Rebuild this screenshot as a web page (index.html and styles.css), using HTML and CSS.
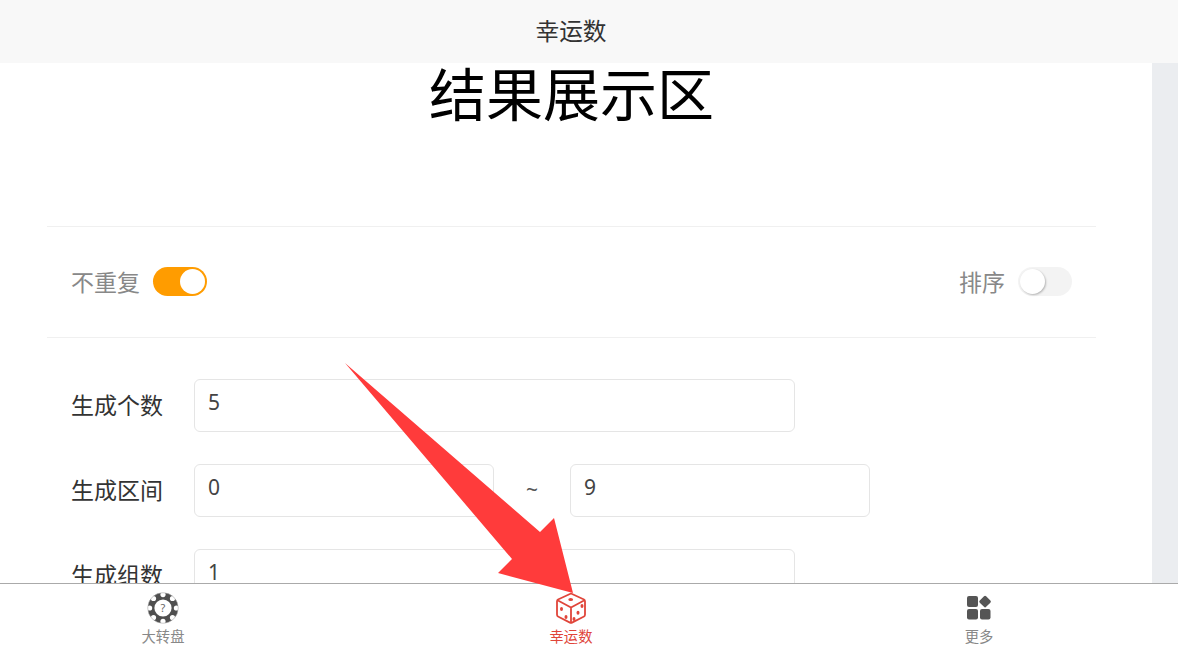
FILE: index.html
```html
<!DOCTYPE html>
<html lang="zh-CN">
<head>
<meta charset="utf-8">
<title>幸运数</title>
<link rel="stylesheet" href="styles.css">
</head>
<body>
<div class="app">
  <header class="navbar">幸运数</header>
  <div class="viewport">
    <main class="content">
      <h1 class="result">结果展示区</h1>
      <section class="options">
        <div class="option">
          <span class="option-label">不重复</span>
          <span class="switch switch-on"><span class="thumb"></span></span>
        </div>
        <div class="option">
          <span class="option-label">排序</span>
          <span class="switch"><span class="thumb"></span></span>
        </div>
      </section>
      <section class="form">
        <div class="row">
          <label class="row-label">生成个数</label>
          <input class="field field-wide" value="5">
        </div>
        <div class="row">
          <label class="row-label">生成区间</label>
          <input class="field field-half" value="0">
          <span class="tilde">~</span>
          <input class="field field-half" value="9">
        </div>
        <div class="row">
          <label class="row-label">生成组数</label>
          <input class="field field-wide" value="1">
        </div>
      </section>
    </main>
    <div class="scrollbar"></div>
  </div>
  <nav class="tabbar">
    <div class="tab">
      <svg class="tab-icon" viewBox="0 0 32 32">
        <circle cx="16" cy="16" r="15.2" fill="#4f4f4f"/>
        <g fill="#fff">
          <circle cx="16" cy="2.6" r="2.6"/>
          <circle cx="16" cy="29.4" r="2.6"/>
          <circle cx="2.6" cy="16" r="2.6"/>
          <circle cx="29.4" cy="16" r="2.6"/>
          <circle cx="6.5" cy="6.5" r="2.6"/>
          <circle cx="25.5" cy="6.5" r="2.6"/>
          <circle cx="6.5" cy="25.5" r="2.6"/>
          <circle cx="25.5" cy="25.5" r="2.6"/>
          <circle cx="16" cy="16" r="8.6"/>
        </g>
        <circle cx="16" cy="16" r="15.3" fill="none" stroke="#aaa" stroke-width="0.6"/>
        <text class="wheel-mark" x="16" y="20.3" text-anchor="middle">?</text>
      </svg>
      <span class="tab-label">大转盘</span>
    </div>
    <div class="tab tab-active">
      <svg class="tab-icon" viewBox="0 0 32 32">
        <path d="M16 1.5 L29 7.5 Q30 8 30 9.5 L30 22.5 Q30 24 29 24.5 L17 30.6 Q16 31 15 30.6 L3 24.5 Q2 24 2 22.5 L2 9.5 Q2 8 3 7.5 Z" fill="none" stroke="#e0453a" stroke-width="1.8" stroke-linejoin="round"/>
        <path d="M3 8.5 L16 15.5 L29 8.5 M16 15.5 L16 30" fill="none" stroke="#e0453a" stroke-width="1.8"/>
        <g fill="#e0453a">
          <ellipse cx="15.7" cy="7.5" rx="2.4" ry="1.6"/>
          <ellipse cx="6.5" cy="17" rx="1.5" ry="2"/>
          <ellipse cx="11" cy="25" rx="1.5" ry="2"/>
          <ellipse cx="27" cy="14" rx="1.5" ry="2"/>
          <ellipse cx="23" cy="20.7" rx="1.5" ry="2"/>
          <ellipse cx="19" cy="27" rx="1.5" ry="2"/>
        </g>
      </svg>
      <span class="tab-label">幸运数</span>
    </div>
    <div class="tab">
      <svg class="tab-icon" viewBox="0 0 32 32">
        <g fill="#555">
          <rect x="4" y="4" width="11" height="11" rx="2"/>
          <rect x="4" y="17" width="11" height="10.5" rx="2"/>
          <rect x="17" y="17" width="10.5" height="10.5" rx="2"/>
          <rect x="17.6" y="5" width="9" height="9" rx="1.5" transform="rotate(45 22 9.5)"/>
        </g>
      </svg>
      <span class="tab-label">更多</span>
    </div>
  </nav>
  <svg class="arrow" viewBox="0 0 1178 647" width="1178" height="647">
    <polygon points="345,363 540,532 554,518 573,593 498,573 512,559" fill="#ff3b3b"/>
  </svg>
</div>
</body>
</html>
```

FILE: styles.css
```css
* { box-sizing: border-box; }

html, body {
  margin: 0;
  height: 100%;
  overflow: hidden;
  background: #fff;
}

body {
  font-family: "Noto Sans", "Noto Sans CJK SC", sans-serif;
}

.app {
  position: relative;
  display: flex;
  flex-direction: column;
  height: 647px;
}

.navbar {
  flex: 0 0 63px;
  display: flex;
  align-items: center;
  justify-content: center;
  padding: 0 36px 4px 0;
  background: #f8f8f8;
  color: #333;
  font-size: 23.7px;
}

.viewport {
  flex: 1;
  min-height: 0;
  display: flex;
  overflow: hidden;
}

.content {
  flex: 1;
  min-width: 0;
  padding: 0 56px 0 47px;
}

.scrollbar {
  flex: 0 0 26px;
  background: #ebedf0;
}

.result {
  margin: 0;
  height: 163px;
  color: #000;
  font-size: 57px;
  font-weight: 400;
  line-height: 62px;
  text-align: center;
}

.options {
  display: flex;
  align-items: center;
  justify-content: space-between;
  height: 112px;
  padding: 0 24px 1px;
  border-top: 1px solid #f0f0f0;
  border-bottom: 1px solid #f0f0f0;
}

.option {
  display: flex;
  align-items: center;
  gap: 13px;
}

.option-label {
  padding-bottom: 2px;
  color: #888;
  font-size: 23px;
}

.switch {
  display: flex;
  align-items: center;
  width: 54px;
  height: 29px;
  padding: 2px;
  border-radius: 15px;
  background: #f3f3f3;
}

.switch-on {
  justify-content: flex-end;
  background: #ff9c00;
}

.thumb {
  width: 25px;
  height: 25px;
  border-radius: 50%;
  background: #fff;
  box-shadow: 1px 1px 2px rgba(0, 0, 0, 0.25);
}

.switch-on .thumb {
  box-shadow: none;
}

.form {
  display: flex;
  flex-direction: column;
  gap: 32px;
  padding: 41px 0 0 24px;
}

.row {
  display: flex;
  align-items: center;
}

.row-label {
  flex: 0 0 123px;
  padding-bottom: 4px;
  color: #333;
  font-size: 23px;
}

.field {
  height: 53px;
  padding: 0 13px 8px;
  border: 1px solid #e5e5e5;
  border-radius: 6px;
  outline: none;
  background: #fff;
  color: #444;
  font-family: inherit;
  font-size: 21px;
}

.field-wide { width: 601px; }
.field-half { width: 300px; }

.tilde {
  flex: 0 0 76px;
  padding-bottom: 4px;
  color: #555;
  font-size: 21px;
  text-align: center;
}

.tabbar {
  flex: 0 0 64px;
  display: flex;
  justify-content: center;
  gap: 288px;
  padding-right: 36px;
  border-top: 1px solid #aaa;
  background: #fff;
}

.tab {
  flex: 0 0 120px;
  display: flex;
  flex-direction: column;
  align-items: center;
  padding-top: 8px;
  color: #888;
}

.tab-active {
  color: #e0453a;
}

.tab-icon {
  width: 32px;
  height: 32px;
}

.tab-label {
  margin-top: 3px;
  font-size: 14.3px;
  line-height: 20px;
}

.wheel-mark {
  fill: #666;
  font-size: 11px;
  font-weight: 400;
}

.arrow {
  position: absolute;
  left: 0;
  top: 0;
  pointer-events: none;
}
```
